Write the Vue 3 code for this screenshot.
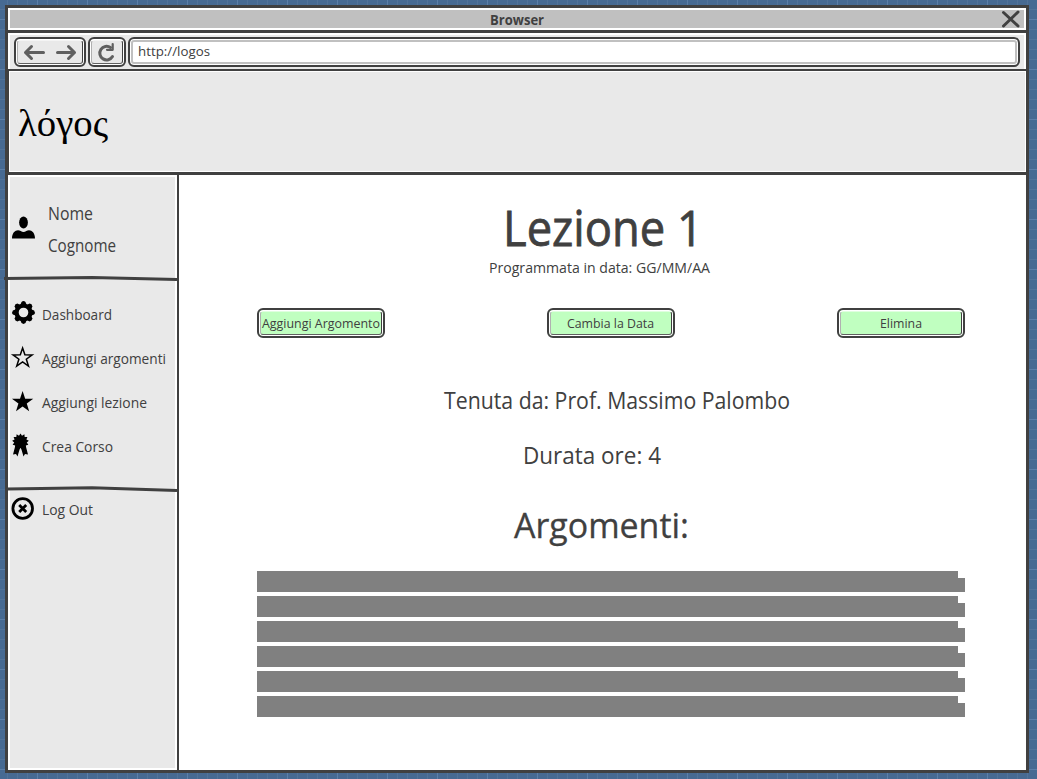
<script setup>
const actions = [
  { label: 'Aggiungi Argomento', x: 5, w: 118 },
  { label: 'Cambia la Data', x: 20, w: 87 },
  { label: 'Elimina', x: 43, w: 42 }
]
const menu = [
  { label: 'Dashboard', icon: 'gear', w: 70 },
  { label: 'Aggiungi argomenti', icon: 'star-outline', w: 124 },
  { label: 'Aggiungi lezione', icon: 'star', w: 105 },
  { label: 'Crea Corso', icon: 'badge', w: 71 }
]
function ring(cx, cy, outer, inner, n) {
  return Array.from({ length: n * 2 }, (_, i) => {
    const r = i % 2 ? inner : outer
    const a = (Math.PI * i) / n - Math.PI / 2
    return (cx + r * Math.cos(a)).toFixed(2) + ',' + (cy + r * Math.sin(a)).toFixed(2)
  }).join(' ')
}
const star = ring(10.6, 13.2, 11.2, 4.4, 5)
const starSmall = ring(10.6, 13, 10, 3.9, 5)
const rosette = ring(8.5, 8.8, 8.4, 6.3, 13)
const teeth = [0, 45, 90, 135, 180, 225, 270, 315]
</script>

<template>
  <div class="desktop">
    <div class="window">
      <div class="titlebar">
        <svg class="title" width="55" height="18"><text x="0" y="15" textLength="54" lengthAdjust="spacingAndGlyphs">Browser</text></svg>
        <svg class="close" width="20" height="18" viewBox="0 0 20 18"><path d="M2.500 2.500 17 16M17 2 2.500 16" /></svg>
      </div>
      <div class="toolbar">
        <div class="navbtn pair">
          <svg width="68" height="26" viewBox="0 0 68 26"><path d="M27.500 13.500H9.500M15.500 7.500l-6 6 6 6M41.500 13.500h17M52.500 7.500l6 6-6 6" /></svg>
        </div>
        <div class="navbtn single">
          <svg width="34" height="26" viewBox="0 0 34 26"><path d="M20.500 8.500A6.800 6.800 0 1 0 22.500 17.500" /><path class="thin" d="M22.700 5v5.800h-5.700" /></svg>
        </div>
        <div class="url">
          <svg width="80" height="24"><text x="3" y="14" textLength="72" lengthAdjust="spacingAndGlyphs">http://logos</text></svg>
        </div>
      </div>
      <header class="banner">
        <svg class="logo" width="110" height="60"><text x="0" y="36" textLength="90" lengthAdjust="spacingAndGlyphs">λόγος</text></svg>
      </header>
      <div class="body">
        <aside class="sidebar">
          <div class="profile">
            <svg class="avatar" width="24" height="24" viewBox="0 0 24 24"><ellipse cx="11.500" cy="6.500" rx="4.400" ry="6" /><path d="M0 22.500C0 17 3 14.300 6 14.200c2 0 3.500 1.700 5.500 1.700s3.500-1.700 5.500-1.700c3 .1 6 2.800 6 8.300z" /></svg>
            <div class="names">
              <svg width="80" height="32"><text x="0" y="23" textLength="45" lengthAdjust="spacingAndGlyphs">Nome</text></svg>
              <svg width="80" height="32"><text x="0" y="23" textLength="68" lengthAdjust="spacingAndGlyphs">Cognome</text></svg>
            </div>
          </div>
          <svg class="rule" width="172" height="6" viewBox="0 0 172 6"><path d="M-1 2.500 87 1.500 172 3.500" /></svg>
          <nav>
            <div v-for="m in menu" :key="m.label" class="item">
              <svg class="icon" width="24" height="24" viewBox="0 0 24 24">
                <g v-if="m.icon === 'gear'">
                  <circle class="wheel" cx="11.500" cy="11.500" r="6.900" />
                  <path v-for="a in teeth" :key="a" d="M8.300 4 9.500 0.900Q11.500-.700 13.500 .9L14.700 4z" :transform="`rotate(${a} 11.5 11.5)`" />
                </g>
                <polygon v-else-if="m.icon === 'star-outline'" class="hollow" :points="starSmall" />
                <polygon v-else-if="m.icon === 'star'" :points="star" />
                <g v-else><polygon :points="rosette" /><path d="M3.500 12 1 21.500l3-.5 1.500 2.500L8 15h1l2.500 8.500L13 21l3 .5L13.500 12z" /></g>
              </svg>
              <svg width="126" height="24"><text x="0" y="18" :textLength="m.w" lengthAdjust="spacingAndGlyphs">{{ m.label }}</text></svg>
            </div>
          </nav>
          <svg class="rule" width="172" height="6" viewBox="0 0 172 6"><path d="M2 3 87 1.700 172 4.500" /></svg>
          <div class="item logout">
            <svg class="icon" width="24" height="24" viewBox="0 0 24 24"><circle class="circle" cx="10.700" cy="11.500" r="9.800" /><path class="cross" d="m7.200 8 7 7m0-7-7 7" /></svg>
            <svg width="126" height="24"><text x="0" y="17" textLength="51" lengthAdjust="spacingAndGlyphs">Log Out</text></svg>
          </div>
        </aside>
        <main>
          <svg class="copy" width="847" height="130">
            <text class="h1" x="324" y="71" textLength="200" lengthAdjust="spacingAndGlyphs">Lezione 1</text>
            <text class="sub" x="310" y="98" textLength="221" lengthAdjust="spacingAndGlyphs">Programmata in data: GG/MM/AA</text>
          </svg>
          <div class="actions">
            <button v-for="a in actions" :key="a.label">
              <svg width="128" height="30"><text :x="a.x" y="20" :textLength="a.w" lengthAdjust="spacingAndGlyphs">{{ a.label }}</text></svg>
            </button>
          </div>
          <svg class="copy" width="847" height="233">
            <text class="info" x="265" y="71" textLength="346" lengthAdjust="spacingAndGlyphs">Tenuta da: Prof. Massimo Palombo</text>
            <text class="info" x="344" y="126" textLength="138" lengthAdjust="spacingAndGlyphs">Durata ore: 4</text>
            <text class="h2" x="335" y="200" textLength="175" lengthAdjust="spacingAndGlyphs">Argomenti:</text>
          </svg>
          <div class="bars"><div v-for="n in 6" :key="n" class="bar" /></div>
        </main>
      </div>
    </div>
  </div>
</template>

<style>
body { margin: 0; overflow: hidden; }
</style>
<style scoped>
* { box-sizing: border-box; }
svg { display: block; flex: none; overflow: visible; }
text { font-family: "Comic Sans MS", "Open Sans", sans-serif; fill: #404040; }
.desktop {
  width: 1037px; height: 779px; padding: 5px 8px 6px 5px;
  background-color: #476a92;
  background-image:
    linear-gradient(90deg, #5c7fa8 1px, transparent 1px),
    linear-gradient(#5c7fa8 1px, transparent 1px),
    linear-gradient(90deg, #527399 1px, transparent 1px),
    linear-gradient(#527399 1px, transparent 1px);
  background-size: 50px 50px, 50px 50px, 10px 10px, 10px 10px;
  background-position: 37px 0, 0 19px, 7px 0, 0 9px;
}
.window { width: 1024px; height: 768px; border: 3px solid #404040; background: #fff; display: flex; flex-direction: column; }
.titlebar { height: 25px; flex: none; padding: 2px; border-bottom: 3px solid #404040; background: #c0c0c0; box-shadow: inset 0 0 0 2px #fff; display: flex; justify-content: space-between; }
.title { margin-left: 480px; }
.title text { font-size: 13.5px; font-weight: 700; }
.close { margin-right: 3px; }
.close path { fill: none; stroke: #404040; stroke-width: 3; stroke-linecap: round; }
.toolbar { height: 36px; flex: none; border: solid #fff; border-width: 2px 2px 0; background: #e9e9e9; display: flex; gap: 2px; padding: 2px 4px; }
.navbtn, button { position: relative; height: 30px; padding: 0; border: 2px solid #404040; border-radius: 6px; box-shadow: inset 0 0 0 1.5px #fff; }
.navbtn { background: #e9e9e9; }
.navbtn::after, button::after { content: ""; position: absolute; inset: 1px; border: 1px solid; border-color: transparent #404040 #606060 #b0b0b0; border-radius: 3px; }
.pair { width: 72px; }
.single { width: 38px; }
.navbtn path { fill: none; stroke: #606060; stroke-width: 3; stroke-linecap: round; stroke-linejoin: round; }
.navbtn .thin { stroke-width: 2.2; }
.url { width: 892px; height: 30px; border: 2px solid #404040; border-radius: 6px; padding: 3px 5px; background: #fff; box-shadow: inset 0 0 0 1px #fff, inset 0 0 0 3px #c0c0c0; }
.url text { font-size: 13px; }
.banner { height: 106px; flex: none; border: solid #404040; border-width: 2px 0 3px 1px; background: #e9e9e9; box-shadow: inset 0 0 0 1px #fff; padding: 29px 0 0 9px; }
.logo text { font-family: "Liberation Serif", serif; font-size: 38px; fill: #000; }
.body { display: flex; flex: 1; min-height: 0; }
.sidebar { width: 171px; border-right: 2px solid #404040; background: #e9e9e9; box-shadow: inset 0 0 0 2px #fff; }
.profile { height: 101px; display: flex; padding: 22px 0 0 4px; gap: 12px; }
.avatar { margin-top: 19px; }
.names text { font-size: 17.5px; }
.rule { margin-left: -3px; }
.rule path { fill: none; stroke: #404040; stroke-width: 3; }
nav { padding-top: 20px; height: 204px; }
.item { height: 44px; display: flex; padding-left: 4px; gap: 6px; }
.item text { font-size: 14.5px; }
.icon { margin-top: -1px; }
.wheel { fill: none; stroke: #000; stroke-width: 4.2; }
.hollow { fill: none; stroke: #000; stroke-width: 1.5; }
.circle { fill: none; stroke: #000; stroke-width: 2.8; }
.cross { fill: none; stroke: #000; stroke-width: 2.8; }
.logout { padding-top: 6px; }
main { width: 847px; }
.copy .h1 { font-size: 49px; stroke: #404040; stroke-width: 0.8px; }
.copy .sub { font-size: 14.5px; }
.copy .info { font-size: 23px; }
.copy .h2 { font-size: 35px; stroke: #404040; stroke-width: 0.3px; }
.actions { margin-top: 3px; padding: 0 61px 0 78px; display: flex; justify-content: space-between; }
button { width: 128px; background: #c0ffc0; }
button svg { margin: -2px; }
button text { font-size: 13.5px; }
.bars { padding-left: 78px; display: grid; gap: 4px; }
.bar { width: 708px; height: 21px; background: #808080; clip-path: polygon(0 0, 701px 0, 701px 7px, 708px 7px, 708px 100%, 0 100%); }
</style>
